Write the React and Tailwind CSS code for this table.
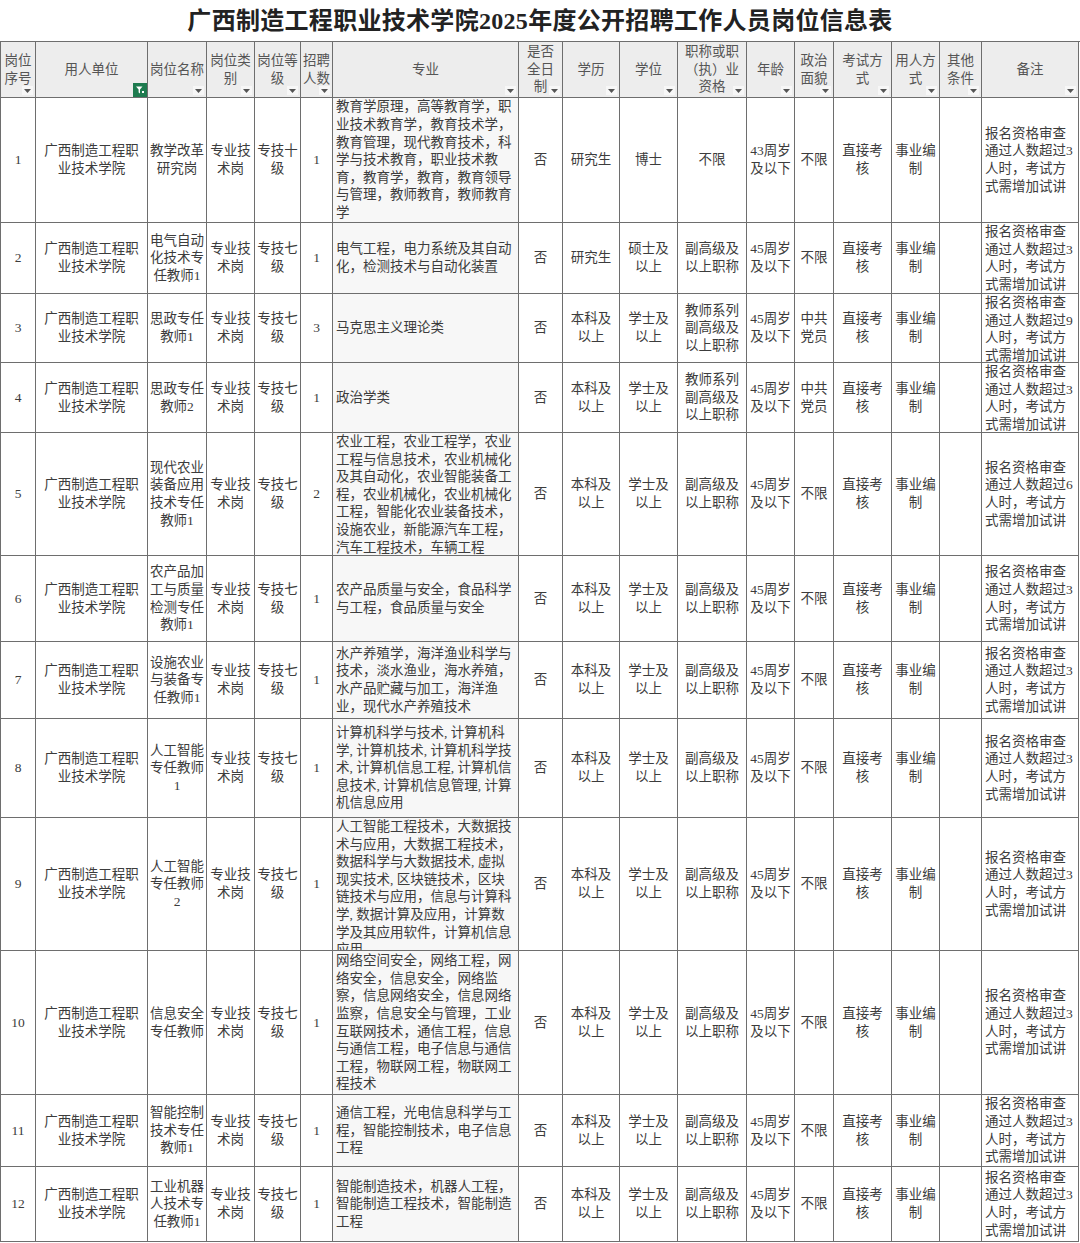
import React from 'react';

const unit = ['广西制造工程职', '业技术学院'];
const tech = ['专业技', '术岗'];
const grade7 = ['专技七', '级'];
const bk = ['本科及', '以上'];
const xs = ['学士及', '以上'];
const fg = ['副高级及', '以上职称'];
const age45 = ['45周岁', '及以下'];

const rows = [
  {
    no: '1', pos: ['教学改革', '研究岗'], grade: ['专技十', '级'], n: '1',
    major: ['教育学原理，高等教育学，职', '业技术教育学，教育技术学，', '教育管理，现代教育技术，科', '学与技术教育，职业技术教', '育，教育学，教育，教育领导', '与管理，教师教育，教师教育', '学'],
    edu: ['研究生'], deg: ['博士'], title: ['不限'], age: ['43周岁', '及以下'], pol: ['不限'], note: '3',
  },
  {
    no: '2', pos: ['电气自动', '化技术专', '任教师1'], grade: grade7, n: '1',
    major: ['电气工程，电力系统及其自动', '化，检测技术与自动化装置'],
    edu: ['研究生'], deg: ['硕士及', '以上'], title: fg, age: age45, pol: ['不限'], note: '3',
  },
  {
    no: '3', pos: ['思政专任', '教师1'], grade: grade7, n: '3',
    major: ['马克思主义理论类'],
    edu: bk, deg: xs, title: ['教师系列', '副高级及', '以上职称'], age: age45, pol: ['中共', '党员'], note: '9',
  },
  {
    no: '4', pos: ['思政专任', '教师2'], grade: grade7, n: '1',
    major: ['政治学类'],
    edu: bk, deg: xs, title: ['教师系列', '副高级及', '以上职称'], age: age45, pol: ['中共', '党员'], note: '3',
  },
  {
    no: '5', pos: ['现代农业', '装备应用', '技术专任', '教师1'], grade: grade7, n: '2',
    major: ['农业工程，农业工程学，农业', '工程与信息技术，农业机械化', '及其自动化，农业智能装备工', '程，农业机械化，农业机械化', '工程，智能化农业装备技术，', '设施农业，新能源汽车工程，', '汽车工程技术，车辆工程'],
    edu: bk, deg: xs, title: fg, age: age45, pol: ['不限'], note: '6',
  },
  {
    no: '6', pos: ['农产品加', '工与质量', '检测专任', '教师1'], grade: grade7, n: '1',
    major: ['农产品质量与安全，食品科学', '与工程，食品质量与安全'],
    edu: bk, deg: xs, title: fg, age: age45, pol: ['不限'], note: '3',
  },
  {
    no: '7', pos: ['设施农业', '与装备专', '任教师1'], grade: grade7, n: '1',
    major: ['水产养殖学，海洋渔业科学与', '技术，淡水渔业，海水养殖，', '水产品贮藏与加工，海洋渔', '业，现代水产养殖技术'],
    edu: bk, deg: xs, title: fg, age: age45, pol: ['不限'], note: '3',
  },
  {
    no: '8', pos: ['人工智能', '专任教师', '1'], grade: grade7, n: '1',
    major: ['计算机科学与技术, 计算机科', '学, 计算机技术, 计算机科学技', '术, 计算机信息工程, 计算机信', '息技术, 计算机信息管理, 计算', '机信息应用'],
    edu: bk, deg: xs, title: fg, age: age45, pol: ['不限'], note: '3',
  },
  {
    no: '9', pos: ['人工智能', '专任教师', '2'], grade: grade7, n: '1',
    major: ['人工智能工程技术，大数据技', '术与应用，大数据工程技术，', '数据科学与大数据技术, 虚拟', '现实技术, 区块链技术，区块', '链技术与应用，信息与计算科', '学, 数据计算及应用，计算数', '学及其应用软件，计算机信息', '应用'],
    edu: bk, deg: xs, title: fg, age: age45, pol: ['不限'], note: '3',
  },
  {
    no: '10', pos: ['信息安全', '专任教师'], grade: grade7, n: '1',
    major: ['网络空间安全，网络工程，网', '络安全，信息安全，网络监', '察，信息网络安全，信息网络', '监察，信息安全与管理，工业', '互联网技术，通信工程，信息', '与通信工程，电子信息与通信', '工程，物联网工程，物联网工', '程技术'],
    edu: bk, deg: xs, title: fg, age: age45, pol: ['不限'], note: '3',
  },
  {
    no: '11', pos: ['智能控制', '技术专任', '教师1'], grade: grade7, n: '1',
    major: ['通信工程，光电信息科学与工', '程，智能控制技术，电子信息', '工程'],
    edu: bk, deg: xs, title: fg, age: age45, pol: ['不限'], note: '3',
  },
  {
    no: '12', pos: ['工业机器', '人技术专', '任教师1'], grade: grade7, n: '1',
    major: ['智能制造技术，机器人工程，', '智能制造工程技术，智能制造', '工程'],
    edu: bk, deg: xs, title: fg, age: age45, pol: ['不限'], note: '3',
  },
];

const headers = [
  ['岗位', '序号'], ['用人单位'], ['岗位名称'], ['岗位类', '别'], ['岗位等', '级'], ['招聘', '人数'],
  ['专业'], ['是否', '全日', '制'], ['学历'], ['学位'], ['职称或职', '（执）业', '资格'], ['年龄'],
  ['政治', '面貌'], ['考试方', '式'], ['用人方', '式'], ['其他', '条件'], ['备注'],
];

function Arrow() {
  return (
    <span className="absolute right-[2px] bottom-[2px] flex h-[9px] w-[11px] items-center justify-center bg-[#f7f7f7]">
      <svg width="7" height="4" viewBox="0 0 7 4"><path d="M0 0h7L3.5 4z" fill="#555" /></svg>
    </span>
  );
}

function FilterIcon() {
  return (
    <span className="absolute right-0 bottom-0 flex h-[14px] w-[14px] items-center justify-center bg-[#1e7b4f]">
      <svg width="10" height="10" viewBox="0 0 10 10">
        <path d="M1 1.5h6.5L5 4.5v4L3.6 7.6V4.5z" fill="white" />
        <rect x="7" y="6" width="2" height="2" fill="white" />
      </svg>
    </span>
  );
}

function Cell({ lines, left, className = '' }) {
  return (
    <div
      className={`flex overflow-hidden border-r border-b border-[#6e6e6e] [align-items:safe_center] ${
        left ? 'justify-start px-[3px] text-left' : '[justify-content:safe_center] px-[1px] text-center'
      } ${className}`}
    >
      <div className="whitespace-nowrap">
        {lines.map((l, i) => (
          <div key={i}>{l}</div>
        ))}
      </div>
    </div>
  );
}

export default function App() {
  return (
    <div
      className="w-[1080px] h-[1243px] overflow-hidden bg-white text-[#3c3c3c]"
      style={{ fontFamily: '"Liberation Serif", "Noto Sans CJK SC", serif' }}
    >
      <div className="flex h-[41px] items-center justify-center">
        <h1 className="text-[24px] font-bold leading-none tracking-[0.3px] text-[#222]">
          广西制造工程职业技术学院2025年度公开招聘工作人员岗位信息表
        </h1>
      </div>
      <div className="grid grid-cols-[35px_112px_59px_48px_46px_32px_186px_44px_57px_58px_69px_48px_39px_58px_48px_42px_97px] grid-rows-[56px_125px_71px_69px_70px_123px_86px_77px_99px_133px_144px_72px_75px] border-t border-l border-[#6e6e6e] text-[13.5px] leading-[17.6px]">
        {headers.map((h, i) => (
          <div
            key={i}
            className="relative flex items-center justify-center overflow-hidden border-r border-b border-[#6e6e6e] bg-[#ededed] text-center text-[#555]"
          >
            <div className="whitespace-nowrap">
              {h.map((l, j) => (
                <div key={j}>{l}</div>
              ))}
            </div>
            {i === 1 ? <FilterIcon /> : <Arrow />}
          </div>
        ))}
        {rows.map((r) => (
          <React.Fragment key={r.no}>
            <Cell lines={[r.no]} />
            <Cell lines={unit} />
            <Cell lines={r.pos} />
            <Cell lines={tech} />
            <Cell lines={r.grade} />
            <Cell lines={[r.n]} />
            <Cell lines={r.major} left className="bg-[#f7f7f7]" />
            <Cell lines={['否']} />
            <Cell lines={r.edu} />
            <Cell lines={r.deg} />
            <Cell lines={r.title} />
            <Cell lines={r.age} />
            <Cell lines={r.pol} />
            <Cell lines={['直接考', '核']} />
            <Cell lines={['事业编', '制']} />
            <Cell lines={[]} />
            <Cell lines={['报名资格审查', `通过人数超过${r.note}`, '人时，考试方', '式需增加试讲']} left />
          </React.Fragment>
        ))}
      </div>
    </div>
  );
}
